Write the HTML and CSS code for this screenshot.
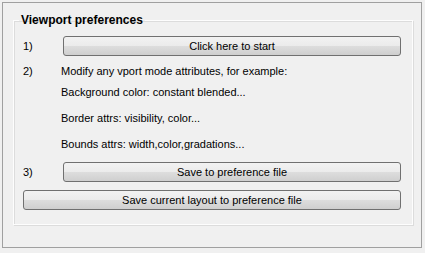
FILE: index.html
```html
<!DOCTYPE html>
<html lang="en">
<head>
    <meta charset="UTF-8">
    <title>Viewport preferences</title>
    <link rel="stylesheet" href="styles.css">
</head>
<body>
    <div class="frame">
        <fieldset class="group">
            <legend>Viewport preferences</legend>

            <div class="step step-first">
                <span class="num">1)</span>
                <button class="btn">Click here to start</button>
            </div>

            <div class="step step-text">
                <span class="num">2)</span>
                <span>Modify any vport mode attributes, for example:</span>
            </div>

            <div class="hint hint-first">Background color: constant blended...</div>
            <div class="hint">Border attrs: visibility, color...</div>
            <div class="hint">Bounds attrs: width,color,gradations...</div>

            <div class="step step-save">
                <span class="num">3)</span>
                <button class="btn">Save to preference file</button>
            </div>

            <button class="btn btn-wide">Save current layout to preference file</button>
        </fieldset>
    </div>
</body>
</html>
```

FILE: styles.css
```css
body {
    margin: 0;
    background-color: #f0f0f0;
    font-family: "Liberation Sans", Arial, sans-serif;
    font-size: 11px;
    color: #000;
}
.frame {
    margin: 2px;
    height: 246px;
    width: 420px;
    border: 1px solid #a0a0a0;
    box-sizing: border-box;
    padding: 10px 0 0 10px;
}
.group {
    margin: 0;
    width: 400px;
    height: 212px;
    box-sizing: border-box;
    padding: 0 11px 0 9px;
    border: 1px solid #fdfdfd;
    box-shadow: inset 1px 1px 0 #dcdcdc, 1px 1px 0 #dcdcdc;
}
legend {
    padding: 0 2px;
    margin-left: -4px;
    font-weight: bold;
    font-size: 12px;
}
.step {
    display: flex;
    align-items: center;
}
.num {
    width: 40px;
    flex-shrink: 0;
}
.step-first {
    margin-top: 9px;
}
.step-text {
    margin-top: 7px;
    height: 16px;
}
.step-text .num {
    width: 38px;
}
.hint {
    margin-left: 38px;
    height: 26px;
    line-height: 26px;
}
.hint-first {
    margin-top: 0;
}
.step-save {
    margin-top: 5px;
}
.btn {
    flex: 1;
    height: 20px;
    padding: 0;
    font-family: inherit;
    font-size: 11px;
    color: #000;
    border: 1px solid #707070;
    border-radius: 3px;
    background: linear-gradient(#f2f2f2 0%, #ebebeb 50%, #dddddd 51%, #cfcfcf 100%);
}
.btn-wide {
    display: block;
    width: 100%;
    margin-top: 8px;
}
```
